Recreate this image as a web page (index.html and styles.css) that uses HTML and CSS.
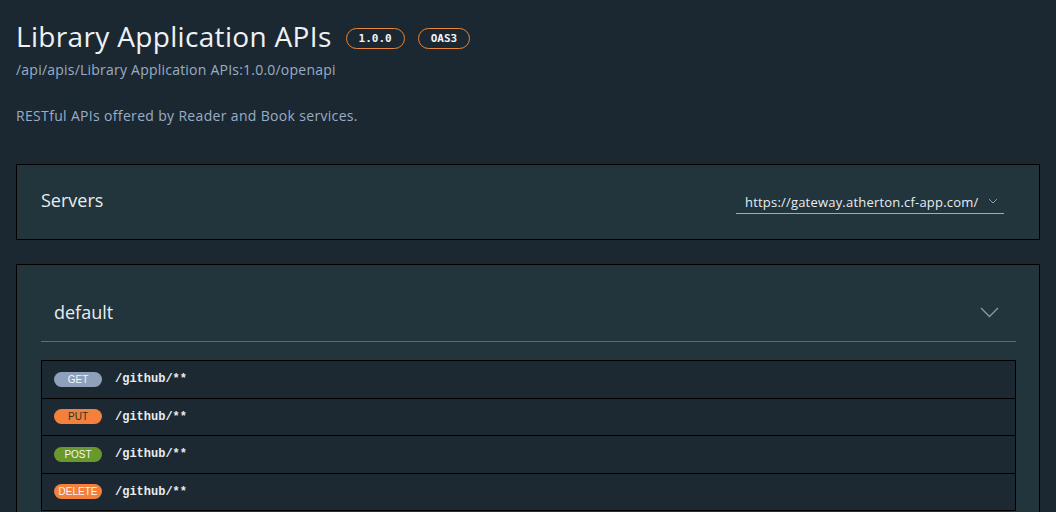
FILE: index.html
```html
<!DOCTYPE html>
<html>
<head>
<meta charset="utf-8">
<link rel="stylesheet" href="styles.css">
</head>
<body>
<div class="page">
  <header class="info">
    <div class="title-row">
      <h1 class="title">Library Application APIs</h1>
      <span class="stamp">1.0.0</span>
      <span class="stamp">OAS3</span>
    </div>
    <div class="url">/api/apis/Library Application APIs:1.0.0/openapi</div>
    <p class="desc">RESTful APIs offered by Reader and Book services.</p>
  </header>

  <section class="panel servers">
    <span class="panel-title">Servers</span>
    <div class="select">
      <span>https://gateway.atherton.cf-app.com/</span>
      <svg class="sel-chev" width="10" height="6" viewBox="0 0 10 6"><path d="M1 1 L5 5 L9 1" fill="none" stroke="#8a9cb0" stroke-width="1"/></svg>
    </div>
  </section>

  <section class="panel ops">
    <div class="tag-head">
      <span class="tag-name">default</span>
      <svg class="tag-chev" width="19" height="11" viewBox="0 0 19 11"><path d="M1 1 L9.5 9.5 L18 1" fill="none" stroke="#8b9ba6" stroke-width="1.3"/></svg>
    </div>
    <div class="op-list">
      <div class="op"><span class="method get">GET</span><span class="path">/github/**</span></div>
      <div class="op"><span class="method put">PUT</span><span class="path">/github/**</span></div>
      <div class="op"><span class="method post">POST</span><span class="path">/github/**</span></div>
      <div class="op"><span class="method delete">DELETE</span><span class="path">/github/**</span></div>
    </div>
  </section>
</div>
</body>
</html>
```

FILE: styles.css
```css
html, body {
  margin: 0;
  padding: 0;
  background: #1c2831;
  height: 100%;
  overflow: hidden;
}
body {
  font-family: "Open Sans", "Liberation Sans", sans-serif;
  color: #e6ebf0;
}
.page {
  padding: 0 16px;
}
.info {
  padding-top: 17px;
}
.title-row {
  display: flex;
  align-items: center;
  gap: 13px;
}
.title {
  margin: 0;
  font-size: 28px;
  font-weight: 400;
  line-height: 38px;
  color: #eef2f5;
  letter-spacing: 0.33px;
}
.stamp {
  display: inline-block;
  border: 1px solid #e9873c;
  border-radius: 11px;
  height: 19px;
  line-height: 19px;
  padding: 0 12px;
  font-family: "DejaVu Sans Mono", monospace;
  font-weight: bold;
  font-size: 11px;
  color: #f2f5f7;
  margin-top: 4px;
}
.title-row .stamp:first-of-type { margin-left: 1px; }
.url {
  font-size: 14px;
  line-height: 20px;
  color: #9aadc6;
  margin-top: 5px;
  letter-spacing: 0.22px;
}
.desc {
  margin: 26px 0 0;
  font-size: 14px;
  line-height: 20px;
  color: #9aadc6;
  letter-spacing: 0.33px;
}
.panel {
  background: #22343c;
  border: 1px solid #000;
}
.servers {
  margin-top: 38px;
  height: 74px;
  display: flex;
  align-items: center;
  justify-content: space-between;
  padding: 0 35px 0 24px;
}
.panel-title {
  font-size: 18px;
  color: #e8edf1;
  margin-top: -4px;
}
.select {
  display: flex;
  align-items: center;
  gap: 10px;
  width: 259px;
  padding: 0 0 2px 9px;
  border-bottom: 1px solid #9aadc6;
  font-size: 13px;
  letter-spacing: 0.2px;
  color: #e8edf1;
  margin-top: 2px;
}
.sel-chev { margin-top: -2px; }
.ops {
  margin-top: 24px;
  padding: 0 23px 0 24px;
  height: 400px;
}
.tag-head {
  display: flex;
  align-items: center;
  justify-content: space-between;
  height: 76px;
  border-bottom: 1px solid #5b6e78;
  padding: 0 17px 0 13px;
}
.tag-name {
  font-size: 18px;
  color: #e8edf1;
  margin-top: 18px;
}
.tag-chev { margin-top: 18px; }
.op-list {
  margin-top: 18px;
  border-left: 1px solid #000;
  border-right: 1px solid #000;
  border-bottom: 1px solid #000;
}
.op {
  display: flex;
  align-items: center;
  height: 36.5px;
  border-top: 1px solid #000;
  background: #1d2932;
  padding-left: 12px;
}
.method {
  width: 48px;
  height: 15px;
  border-radius: 8px;
  font-family: "Liberation Sans", Arial, sans-serif;
  font-size: 10px;
  line-height: 15px;
  text-align: center;
  color: #f4f6f8;
  flex: none;
}
.get { background: #8fa0ba; }
.put { background: #f4803d; color: #1f3a1f; }
.post { background: #69982b; }
.delete { background: #f4803d; }
.path {
  margin-left: 13px;
  font-family: "Liberation Mono", "Courier New", monospace;
  font-weight: bold;
  font-size: 12px;
  color: #e8edf1;
}
```
